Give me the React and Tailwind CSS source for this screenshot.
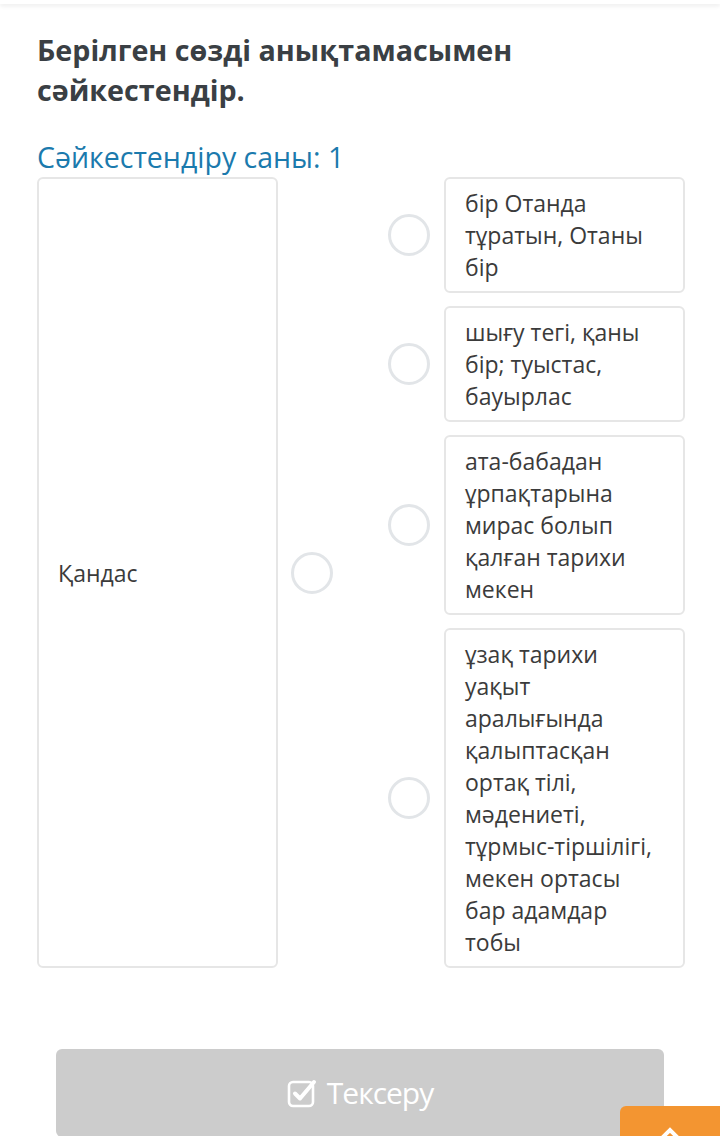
import React from 'react';

const answers = [
  'бір Отанда тұратын, Отаны бір',
  'шығу тегі, қаны бір; туыстас, бауырлас',
  'ата-бабадан ұрпақтарына мирас болып қалған тарихи мекен',
  'ұзақ тарихи уақыт аралығында қалыптасқан ортақ тілі, мәдениеті, тұрмыс-тіршілігі, мекен ортасы бар адамдар тобы',
];

const Dot = () => (
  <div className="w-[42px] h-[42px] shrink-0 rounded-full border-[3px] border-[#e2e5e8] bg-white" />
);

export default function App() {
  return (
    <div className="relative w-[720px] h-[1136px] overflow-hidden bg-white font-['Open_Sans',sans-serif] text-[#3b3b3b]">
      {/* top bar shadow */}
      <div className="h-[4px] w-full bg-white shadow-[0_2px_4px_rgba(0,0,0,0.08)]" />

      <div className="px-[37px] pt-[26px]">
        <h1 className="text-[28.7px] leading-[40px] font-bold text-[#3a3f44]">
          Берілген сөзді анықтамасымен сәйкестендір.
        </h1>
        <p className="mt-[29px] text-[28.5px] leading-[36px] text-[#1b7aad]">Сәйкестендіру саны: 1</p>

        <div className="mt-[2px] flex">
          {/* left side */}
          <div className="flex items-center gap-[13px]">
            <div className="w-[241px] h-[791px] rounded-[6px] border-2 border-[#e6e6e6] flex items-center pl-[19px]">
              <span className="text-[23px] leading-[32px]">Қандас</span>
            </div>
            <Dot />
          </div>

          {/* right side */}
          <div className="ml-[55px] flex flex-col gap-[13px]">
            {answers.map((a) => (
              <div key={a} className="flex items-center gap-[14px]">
                <Dot />
                <div className="w-[241px] rounded-[6px] border-2 border-[#e6e6e6] py-[8px] pl-[19px] pr-[18px] text-[23px] leading-[32px]">
                  {a}
                </div>
              </div>
            ))}
          </div>
        </div>

        <div className="mt-[81px] mx-[19px] h-[88px] rounded-[6px] bg-[#cccccc] flex items-center justify-center gap-[10px] text-white">
          <svg width="30" height="30" viewBox="0 0 30 30" fill="none">
            <rect x="2" y="4" width="24" height="24" rx="4" stroke="white" strokeWidth="2.6" />
            <path d="M8 15.5l5 5L27 4" stroke="white" strokeWidth="4" strokeLinecap="round" strokeLinejoin="round" />
          </svg>
          <span className="text-[30px] leading-[40px] tracking-[-1px]">Тексеру</span>
        </div>
      </div>

      {/* scroll-top button */}
      <div className="absolute left-[620px] top-[1106px] w-[100px] h-[60px] rounded-tl-[6px] bg-[#f39531] flex justify-center pt-[20px]">
        <svg width="20" height="14" viewBox="0 0 20 14">
          <path d="M2 12L10 4l8 8" stroke="white" strokeWidth="4" fill="none" />
        </svg>
      </div>
    </div>
  );
}
